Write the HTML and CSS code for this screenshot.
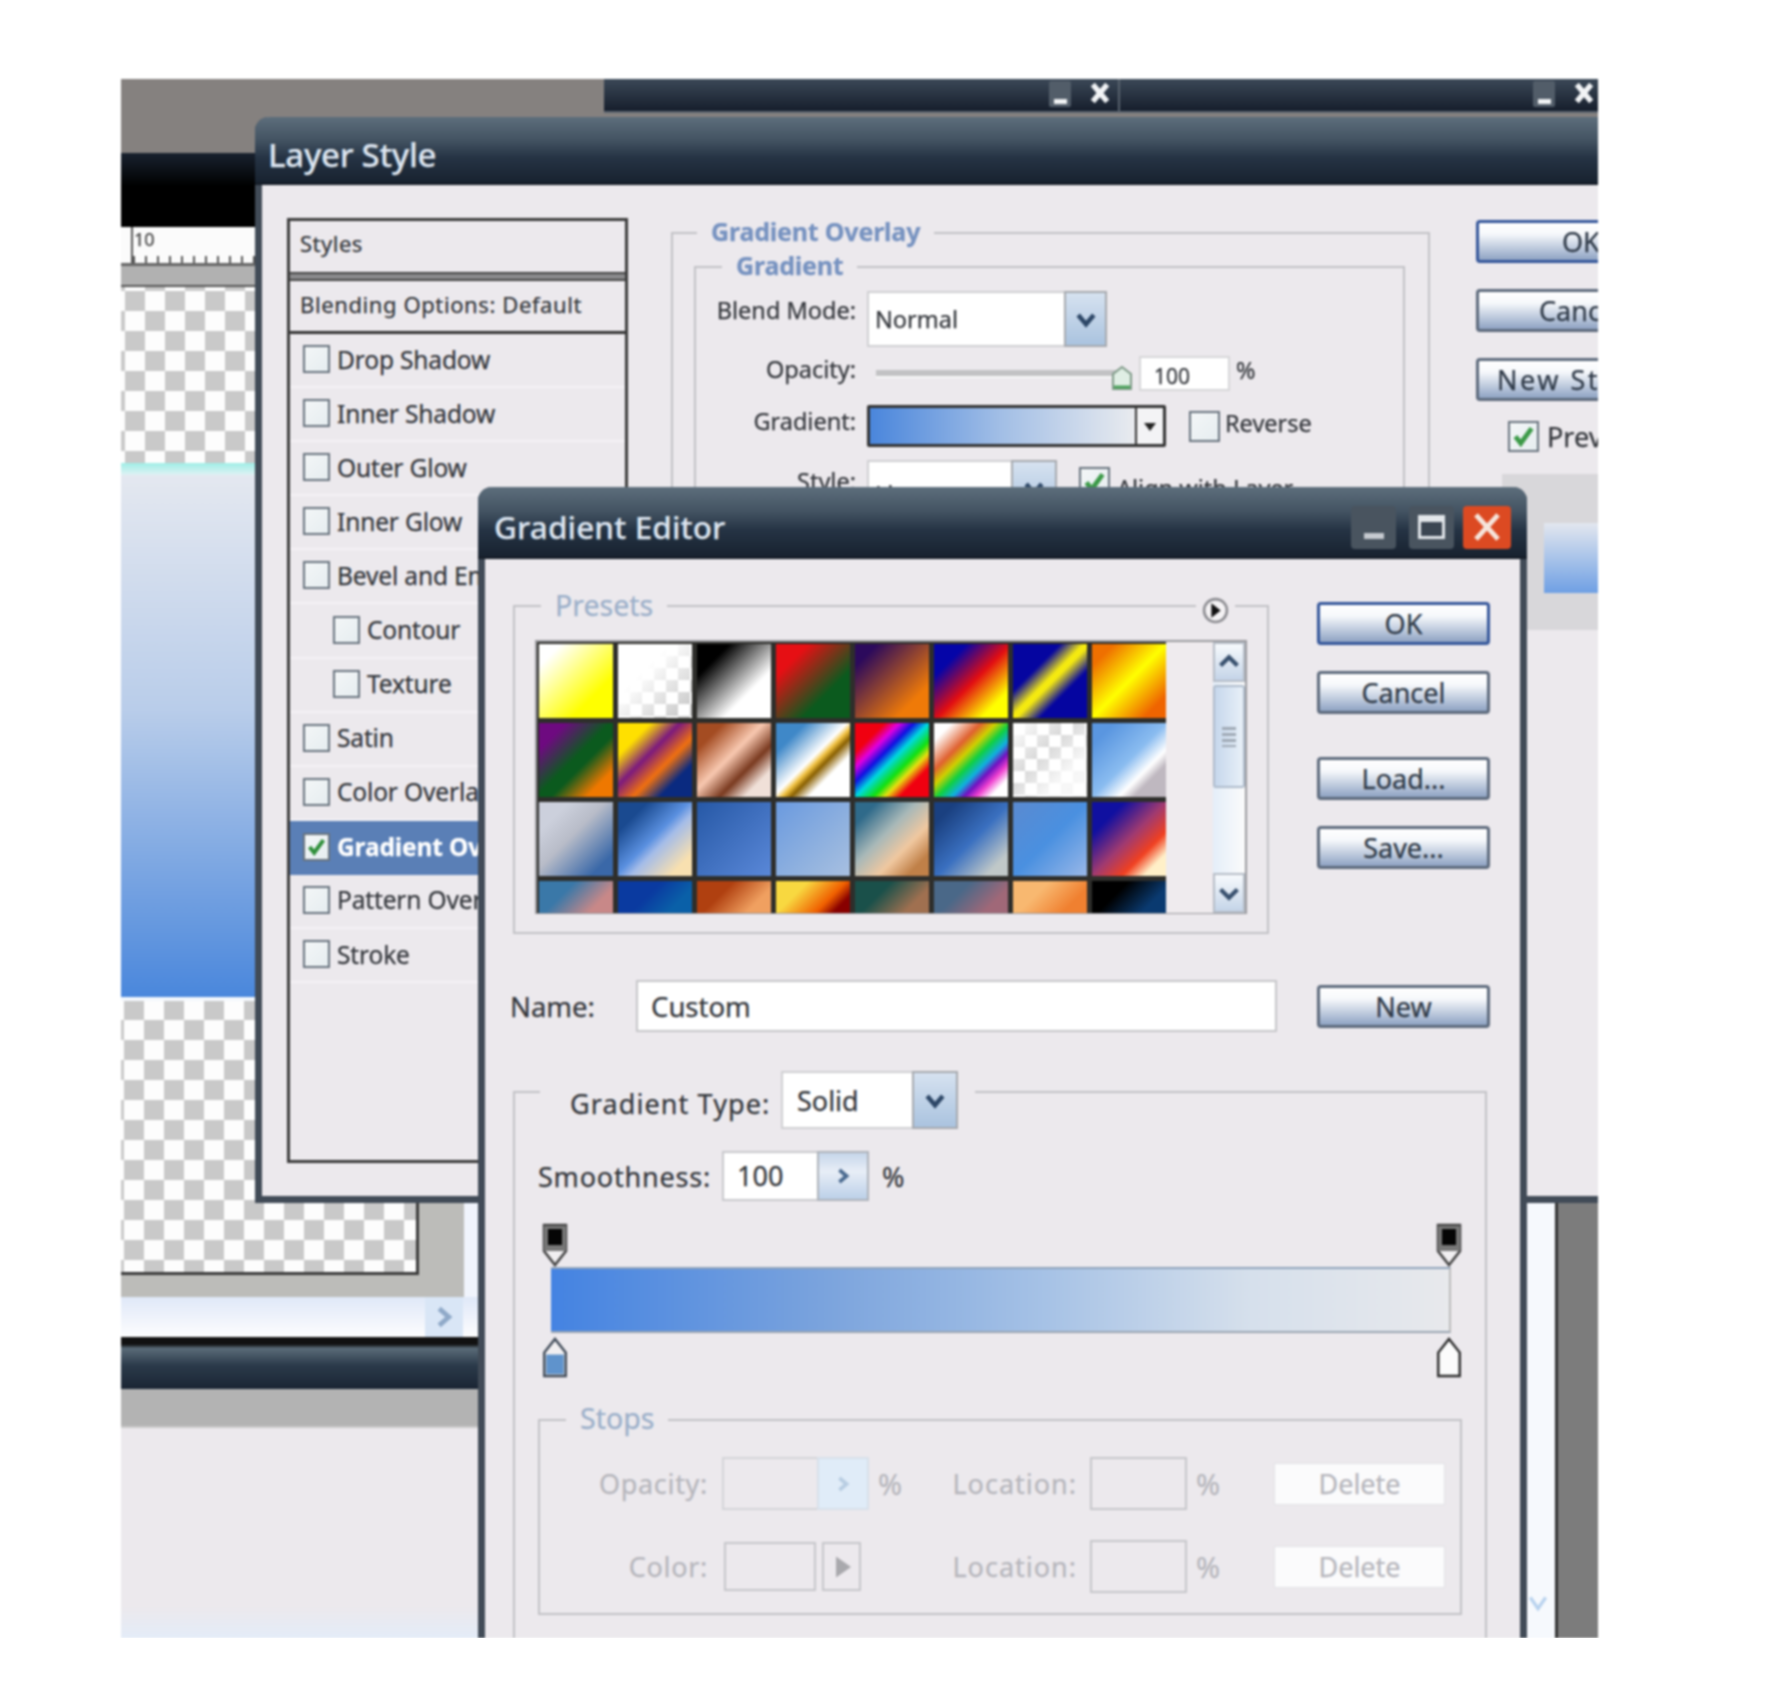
FILE: index.html
```html
<!DOCTYPE html>
<html lang="en">
<head>
    <meta charset="UTF-8">
    <title>Layer Style - Gradient Editor</title>
    <link rel="stylesheet" href="styles.css">
</head>
<body>
<div class="shot">
    <!-- the document behind the dialogs -->
    <div class="desk">
        <div class="band-top">
            <div class="tab tab-a">
                <span class="tab-min"></span>
                <svg class="tab-x" viewBox="0 0 20 20"><path d="M4 3l12 14M16 3L4 17" stroke="#f2f4f6" stroke-width="4.5"/></svg>
            </div>
            <div class="tab tab-b">
                <span class="tab-min"></span>
                <svg class="tab-x" viewBox="0 0 20 20"><path d="M4 3l12 14M16 3L4 17" stroke="#f2f4f6" stroke-width="4.5"/></svg>
            </div>
        </div>
        <div class="band-black"></div>
        <div class="ruler"><span class="ruler-num">10</span><div class="ruler-ticks"></div></div>
        <div class="band-grey"></div>
        <div class="checker checker-top"></div>
        <div class="band-cyan"></div>
        <div class="band-gradient"></div>
        <div class="band-white"></div>
        <div class="lower">
            <div class="checker checker-low"></div>
            <div class="lower-pale"></div>
        </div>
        <div class="lower lower-grey"><div class="lower-pale"></div></div>
        <div class="scroll-strip">
            <span class="scroll-btn"><svg viewBox="0 0 20 20"><path d="M6 3l8 7-8 7" fill="none" stroke="#8fa9c8" stroke-width="4"/></svg></span>
        </div>
        <div class="band-title"></div>
        <div class="band-grey2"></div>
        <div class="band-pale"></div>
    </div>

    <div class="dock">
        <svg class="dock-arrow" viewBox="0 0 20 20"><path d="M3 5l7 10 7-10" fill="none" stroke="#b8d2ee" stroke-width="3"/></svg>
        <div class="dock-grey"></div>
    </div>

    <!-- Layer Style dialog -->
    <div class="window layer-win">
        <div class="titlebar">Layer Style</div>
        <div class="layer-body">
            <div class="style-list">
                <div class="list-head">Styles</div>
                <div class="list-sep"></div>
                <div class="list-blend">Blending Options: Default</div>
                <div class="list-row"><span class="check"></span>Drop Shadow</div>
                <div class="list-row"><span class="check"></span>Inner Shadow</div>
                <div class="list-row"><span class="check"></span>Outer Glow</div>
                <div class="list-row"><span class="check"></span>Inner Glow</div>
                <div class="list-row"><span class="check"></span>Bevel and Emboss</div>
                <div class="list-row sub"><span class="check"></span>Contour</div>
                <div class="list-row sub"><span class="check"></span>Texture</div>
                <div class="list-row"><span class="check"></span>Satin</div>
                <div class="list-row"><span class="check"></span>Color Overlay</div>
                <div class="list-row selected"><span class="check"><svg viewBox="0 0 20 20"><path d="M4 10l4 5 8-11" fill="none" stroke="#2f8f3a" stroke-width="3.5"/></svg></span>Gradient Overlay</div>
                <div class="list-row"><span class="check"></span>Pattern Overlay</div>
                <div class="list-row"><span class="check"></span>Stroke</div>
            </div>

            <div class="group outer-group">
                <div class="legend legend-bold outer-legend">Gradient Overlay</div>
                <div class="group inner-group">
                    <div class="legend legend-bold inner-legend">Gradient</div>
                    <div class="field blend-field">
                        <label class="field-label">Blend Mode:</label>
                        <div class="select blend-select">
                            <span class="select-text">Normal</span>
                            <span class="select-btn"><svg viewBox="0 0 20 20"><path d="M4 7l6 7 6-7" fill="none" stroke="#2d4767" stroke-width="3.5"/></svg></span>
                        </div>
                    </div>
                    <div class="field opacity-field">
                        <label class="field-label">Opacity:</label>
                        <div class="slider"></div>
                        <svg class="slider-thumb" viewBox="0 0 24 26"><path d="M12 2l9 7v15H3V9z" fill="#dfeee4" stroke="#7f9a88" stroke-width="2"/><path d="M4 22h16" stroke="#4da35c" stroke-width="3"/></svg>
                        <div class="small-input">100</div>
                        <span class="percent">%</span>
                    </div>
                    <div class="field gradient-field">
                        <label class="field-label">Gradient:</label>
                        <div class="gradient-pick">
                            <div class="gradient-fill"></div>
                            <div class="gradient-drop"><svg viewBox="0 0 20 20"><path d="M4 7h12l-6 8z" fill="#222"/></svg></div>
                        </div>
                        <span class="check reverse-check"></span>
                        <span class="reverse-text">Reverse</span>
                    </div>
                    <div class="field style-field">
                        <label class="field-label">Style:</label>
                        <div class="select style-select">
                            <span class="select-text">Linear</span>
                            <span class="select-btn"><svg viewBox="0 0 20 20"><path d="M4 7l6 7 6-7" fill="none" stroke="#2d4767" stroke-width="3.5"/></svg></span>
                        </div>
                        <span class="check align-check"><svg viewBox="0 0 20 20"><path d="M4 10l4 5 8-11" fill="none" stroke="#3c9a48" stroke-width="3.5"/></svg></span>
                        <span class="align-text">Align with Layer</span>
                    </div>
                </div>
            </div>

            <div class="layer-actions">
                <div class="btn btn-default btn-cut">OK</div>
                <div class="btn btn-cut">Cancel</div>
                <div class="btn btn-cut btn-newstyle">New Style...</div>
                <div class="preview-row">
                    <span class="check"><svg viewBox="0 0 20 20"><path d="M4 10l4 5 8-11" fill="none" stroke="#3c9a48" stroke-width="3.5"/></svg></span>
                    <span>Preview</span>
                </div>
                <div class="preview-box"><div class="preview-swatch"></div></div>
            </div>
        </div>
    </div>

    <!-- Gradient Editor dialog -->
    <div class="window editor-win">
        <div class="titlebar editor-title">
            <span>Gradient Editor</span>
            <div class="win-btns">
                <div class="win-btn"><span class="win-min"></span></div>
                <div class="win-btn"><span class="win-max"></span></div>
                <div class="win-btn win-close"><svg viewBox="0 0 40 40"><path d="M10 9l20 22M30 9L10 31" stroke="#f6e6dc" stroke-width="4.5"/></svg></div>
            </div>
        </div>
        <div class="editor-body">
            <div class="editor-top">
                <div class="group presets-group">
                    <div class="legend legend-pale presets-legend">Presets</div>
                    <span class="presets-menu"><svg viewBox="0 0 26 26"><circle cx="13" cy="13" r="11" fill="#f4f2f4" stroke="#8d8d92" stroke-width="2.5"/><path d="M9 6l9 7-9 7z" fill="#111"/></svg></span>
                    <div class="presets-box">
                        <div class="presets-grid">
                            <div class="p p1"></div><div class="p p2"></div><div class="p p3"></div><div class="p p4"></div>
                            <div class="p p5"></div><div class="p p6"></div><div class="p p7"></div><div class="p p8"></div>
                            <div class="p p9"></div><div class="p p10"></div><div class="p p11"></div><div class="p p12"></div>
                            <div class="p p13"></div><div class="p p14"></div><div class="p p15"></div><div class="p p16"></div>
                            <div class="p p17"></div><div class="p p18"></div><div class="p p19"></div><div class="p p20"></div>
                            <div class="p p21"></div><div class="p p22"></div><div class="p p23"></div><div class="p p24"></div>
                            <div class="p p25"></div><div class="p p26"></div><div class="p p27"></div><div class="p p28"></div>
                            <div class="p p29"></div><div class="p p30"></div><div class="p p31"></div><div class="p p32"></div>
                        </div>
                        <div class="scrollbar">
                            <div class="sb-btn"><svg viewBox="0 0 20 20"><path d="M3 13l7-7 7 7" fill="none" stroke="#38506e" stroke-width="3.5"/></svg></div>
                            <div class="sb-thumb"><span class="sb-grip"></span></div>
                            <div class="sb-track"></div>
                            <div class="sb-btn"><svg viewBox="0 0 20 20"><path d="M3 7l7 7 7-7" fill="none" stroke="#38506e" stroke-width="3.5"/></svg></div>
                        </div>
                    </div>
                </div>
                <div class="editor-actions">
                    <div class="btn btn-default">OK</div>
                    <div class="btn">Cancel</div>
                    <div class="btn btn-gap">Load...</div>
                    <div class="btn">Save...</div>
                </div>
            </div>

            <div class="name-row">
                <label class="name-label">Name:</label>
                <div class="name-input">Custom</div>
                <div class="btn">New</div>
            </div>

            <div class="group type-group">
                <div class="type-legend">
                    <span class="type-label">Gradient Type:</span>
                    <div class="select type-select">
                        <span class="select-text">Solid</span>
                        <span class="select-btn"><svg viewBox="0 0 20 20"><path d="M4 7l6 7 6-7" fill="none" stroke="#2d4767" stroke-width="3.5"/></svg></span>
                    </div>
                </div>

                <div class="smooth-row">
                    <label class="smooth-label">Smoothness:</label>
                    <div class="spin">
                        <span class="spin-text">100</span>
                        <span class="spin-btn"><svg viewBox="0 0 20 20"><path d="M7 5l6 5-6 5" fill="none" stroke="#49698f" stroke-width="3"/></svg></span>
                    </div>
                    <span class="smooth-pct">%</span>
                </div>

                <div class="stop-row">
                    <svg class="stop" viewBox="0 0 26 44"><path d="M2 2h22v26L13 42 2 28z" fill="#f1eff1" stroke="#444" stroke-width="2.5"/><path d="M2 3h22v25H2z" fill="#777"/><path d="M6 6h14v16H6z" fill="#050505"/></svg>
                    <svg class="stop" viewBox="0 0 26 44"><path d="M2 2h22v26L13 42 2 28z" fill="#f1eff1" stroke="#444" stroke-width="2.5"/><path d="M2 3h22v25H2z" fill="#777"/><path d="M6 6h14v16H6z" fill="#050505"/></svg>
                </div>
                <div class="gradient-bar"></div>
                <div class="stop-row stop-row-low">
                    <svg class="stop" viewBox="0 0 26 42"><path d="M13 2l11 14v24H2V16z" fill="#f1eff1" stroke="#3f4a58" stroke-width="2.5"/><path d="M4 18h18v20H4z" fill="#5f93cc"/></svg>
                    <svg class="stop" viewBox="0 0 26 42"><path d="M13 2l11 14v24H2V16z" fill="#fbfbfb" stroke="#2c2c2c" stroke-width="2.5"/></svg>
                </div>

                <div class="group stops-group">
                    <div class="legend legend-pale stops-legend">Stops</div>
                    <div class="stops-line">
                        <span class="off-label">Opacity:</span>
                        <div class="spin spin-off">
                            <span class="spin-text"></span>
                            <span class="spin-btn"><svg viewBox="0 0 20 20"><path d="M7 5l6 5-6 5" fill="none" stroke="#b8cde2" stroke-width="3"/></svg></span>
                        </div>
                        <span class="off-pct">%</span>
                        <span class="off-loc">Location:</span>
                        <div class="off-input"></div>
                        <span class="off-pct off-pct-b">%</span>
                        <div class="btn-off">Delete</div>
                    </div>
                    <div class="stops-line stops-line-b">
                        <span class="off-label">Color:</span>
                        <div class="color-cell">
                            <div class="color-swatch"></div>
                            <div class="color-btn"><svg viewBox="0 0 20 20"><path d="M6 3l10 7-10 7z" fill="#a9a9ad"/></svg></div>
                        </div>
                        <span class="off-pct"></span>
                        <span class="off-loc">Location:</span>
                        <div class="off-input"></div>
                        <span class="off-pct off-pct-b">%</span>
                        <div class="btn-off">Delete</div>
                    </div>
                </div>
            </div>
        </div>
    </div>
</div>
</body>
</html>
```

FILE: styles.css
```css
body {
    margin: 0;
    background: #fff;
    font-family: "Noto Sans", "Open Sans", sans-serif;
    color: #33363b;
}

.shot {
    position: relative;
    width: 1477px;
    height: 1559px;
    margin: 79px 0 0 121px;
    overflow: hidden;
    filter: blur(0.8px);
    -webkit-text-stroke: 0.25px;
}

/* document behind */
.desk {
    display: flex;
    flex-direction: column;
    height: 100%;
}

.band-top {
    display: flex;
    height: 74px;
    padding-left: 483px;
    background: #85817f;
    box-sizing: border-box;
}

.tab {
    display: flex;
    align-items: flex-start;
    justify-content: flex-end;
    gap: 17px;
    height: 34px;
    padding-top: 2px;
    background: linear-gradient(#3b4857, #161e2c);
    border-bottom: 2px solid #5b6570;
    box-sizing: border-box;
}

.tab-a { width: 516px; padding-right: 6px; border-right: 2px solid #59636e; }
.tab-b { flex: 1; padding-right: 2px; }

.tab-min {
    width: 22px;
    height: 26px;
    background: linear-gradient(#f0f2f4, #f0f2f4) center bottom 3px / 13px 5px no-repeat, #525d69;
    border-radius: 2px;
}

.tab-x { width: 24px; height: 24px; }

.band-black { height: 74px; background: linear-gradient(#19222f, #000 45%); }

.ruler {
    position: relative;
    height: 39px;
    background: #fbfbfb;
    border-bottom: 3px solid #666;
    box-sizing: border-box;
}

.ruler-num {
    position: absolute;
    left: 13px;
    top: 0;
    font-size: 18px;
    color: #444;
}

.ruler-ticks {
    position: absolute;
    left: 10px;
    right: 0;
    top: 0;
    bottom: 0;
    border-left: 2px solid #555;
    background: repeating-linear-gradient(90deg, #555 0 2px, transparent 2px 12px) 0 100% / 100% 7px no-repeat;
}

.band-grey { height: 21px; background: #b1b1b1; border-bottom: 2px solid #555; box-sizing: border-box; }

.checker {
    background: repeating-conic-gradient(#c9c9c9 0 25%, #fdfdfd 0 50%) -16px 4px / 40px 40px;
}

.checker-top { height: 176px; }
.band-cyan { height: 12px; background: linear-gradient(#9feee6, #dff2f4); }
.band-gradient { height: 522px; background: linear-gradient(#e4e8f0, #b9cdea 45%, #4a87dc); }
.band-white { height: 4px; background: #f4f8fd; }

.lower { display: flex; width: 357px; height: 274px; background: #bcbcb9; }
.checker-low { width: 298px; background-position: -17px -1px; border-right: 3px solid #3a3a3a; border-bottom: 3px solid #3a3a3a; box-sizing: border-box; }
.lower-pale { width: 14px; margin-left: auto; background: #f0f4fc; }

.lower-grey { height: 22px; }

.scroll-strip {
    display: flex;
    justify-content: flex-end;
    height: 40px;
    width: 357px;
    padding-right: 15px;
    box-sizing: border-box;
    background: linear-gradient(#dfe8f8, #fdfdfe);
}

.scroll-btn {
    display: flex;
    align-items: center;
    justify-content: center;
    width: 38px;
    background: #d9e6f6;
}

.scroll-btn svg { width: 24px; height: 24px; }

.band-title { height: 52px; background: linear-gradient(#111 0 14%, #5a6b78 22%, #2b3a4a 55%, #1a2534); }
.band-grey2 { height: 39px; background: #b3b3b3; border-bottom: 2px solid #c9c9c9; box-sizing: border-box; }
.band-pale { flex: 1; background: linear-gradient(#ece9ed 85%, #e4ecf8); }

.dock {
    position: absolute;
    right: 0;
    top: 1122px;
    bottom: 0;
    display: flex;
    width: 71px;
    background: #f6f9fd;
}

.dock-grey { position: absolute; right: 0; top: 0; bottom: 0; width: 40px; background: #7c7c7c; border-left: 3px solid #333; }
.dock-arrow { position: absolute; left: 0; bottom: 20px; width: 22px; height: 30px; }

/* dialogs */
.window {
    position: absolute;
    background: #ece9ed;
    border: 7px solid #414b57;
    border-top: 0;
    border-radius: 14px 14px 0 0;
    box-sizing: border-box;
}

.layer-win { left: 134px; top: 38px; width: 1500px; height: 1086px; }
.editor-win { left: 357px; top: 408px; width: 1049px; height: 1200px; border-bottom: 0; }

.titlebar {
    margin: 0 -7px;
    height: 68px;
    padding: 8px 13px 0;
    box-sizing: border-box;
    display: flex;
    align-items: center;
    justify-content: space-between;
    background: linear-gradient(#5d6e7c, #435362 35%, #253344 62%, #18222f);
    border-radius: 14px 14px 0 0;
    border-bottom: 2px solid #151c26;
    font-size: 33px;
    font-weight: 500;
    color: #dde5f0;
    letter-spacing: -0.3px;
}

.editor-title { height: 72px; padding: 8px 16px 0; font-size: 31.5px; letter-spacing: 0.1px; }

.win-btns { display: flex; gap: 13px; margin-top: 2px; }

.win-btn {
    display: flex;
    align-items: center;
    justify-content: center;
    width: 45px;
    height: 43px;
    background: #49545f;
    border-radius: 4px;
    box-sizing: border-box;
}

.win-btn:nth-child(2) { margin-right: -4px; }

.win-min { width: 20px; height: 6px; margin-top: 18px; background: #c6cad0; }
.win-max { width: 27px; height: 24px; background: #3b4652; border: 3px solid #e2e6ea; border-top-width: 7px; box-sizing: border-box; }

.win-close { width: 48px; background: #dc4a22; }
.win-close svg { width: 44px; height: 44px; }

.layer-body { display: flex; height: 1018px; padding: 33px 0 0 25px; box-sizing: border-box; }

/* style list */
.style-list {
    width: 341px;
    height: 945px;
    flex-shrink: 0;
    border: 3px solid #3c3c3c;
    box-sizing: border-box;
    font-size: 24.5px;
    letter-spacing: -0.15px;
}

.list-head { height: 51px; line-height: 45px; padding-left: 10px; font-size: 22px; letter-spacing: 0.5px; }
.list-sep { height: 9px; background: #8a8a8c; border-top: 2px solid #444; border-bottom: 2px solid #444; box-sizing: border-box; }
.list-blend { height: 53px; line-height: 46px; padding-left: 10px; font-size: 22px; letter-spacing: 0.6px; border-bottom: 3px solid #333; box-sizing: border-box; }

.list-row {
    display: flex;
    align-items: center;
    gap: 7px;
    height: 54.1px;
    padding: 0 0 2px 13px;
    box-sizing: border-box;
    border-bottom: 2px solid #f4f2f5;
    white-space: nowrap;
}

.list-row.sub { padding-left: 43px; }

.list-row.selected { background: #5a7fb6; color: #fff; font-weight: 700; border-bottom: 0; }

.check {
    display: inline-block;
    flex-shrink: 0;
    width: 27px;
    height: 28px;
    background: linear-gradient(135deg, #f3f6f7, #e6edf0);
    border: 2px solid #68737e;
    box-sizing: border-box;
}

.check svg { display: block; width: 100%; height: 100%; }

/* group boxes */
.group {
    position: relative;
    border: 2px solid #c2c2c6;
    box-sizing: border-box;
}

.legend {
    position: absolute;
    padding: 0 14px;
    background: #ece9ed;
    white-space: nowrap;
    line-height: 30px;
}

.legend-bold { color: #7692c0; font-weight: 700; font-size: 25px; letter-spacing: -0.2px; }
.legend-pale { color: #9bafc9; font-size: 28.5px; }

.outer-group { width: 759px; height: 700px; margin: 14px 0 0 43px; padding: 32px 23px 0 21px; flex-shrink: 0; }
.outer-legend { left: 24px; top: -18px; }
.inner-group { height: 500px; padding-top: 23px; }
.inner-legend { left: 26px; top: -18px; }

.field { display: flex; align-items: center; font-size: 23.5px; }

.field-label { width: 160px; margin-right: 11px; text-align: right; flex-shrink: 0; }

.blend-field { height: 56px; margin-bottom: 9px; }
.blend-field .field-label { margin-bottom: 18px; }
.opacity-field { height: 35px; margin-bottom: 14px; }
.opacity-field .field-label { margin-bottom: 10px; }
.gradient-field { height: 42px; margin-bottom: 13px; }
.gradient-field .field-label { margin-bottom: 10px; }
.style-field { height: 56px; }
.style-field .field-label { margin-bottom: 14px; }

.select {
    display: flex;
    background: #fff;
    border: 2px solid #cfcfd2;
    box-sizing: border-box;
}

.select-text { flex: 1; padding-left: 6px; align-self: flex-end; padding-bottom: 10px; }

.select-btn {
    display: flex;
    align-items: center;
    justify-content: center;
    background: linear-gradient(#d6e2f0, #aac3df);
    border: 2px solid #a6a9ae;
    margin: -2px;
}

.select-btn svg { width: 26px; height: 26px; }

.blend-select { width: 240px; height: 56px; }
.blend-select .select-btn { width: 39px; }
.style-select { width: 190px; height: 56px; }
.style-select .select-btn { width: 42px; }
.style-select .select-text { padding-bottom: 4px; }

.slider {
    width: 240px;
    height: 6px;
    margin-left: 9px;
    background: #c2c2c4;
    border-bottom: 2px solid #f8f8f8;
}

.slider-thumb { width: 24px; height: 26px; margin: 8px -6px 0 -6px; }

.small-input {
    width: 91px;
    height: 35px;
    margin-left: 11px;
    padding-left: 13px;
    line-height: 36px;
    background: #fff;
    border: 2px solid #d6d6d8;
    box-sizing: border-box;
    font-size: 21px;
}

.percent { margin: -8px 0 0 6px; }

.gradient-pick {
    display: flex;
    width: 299px;
    height: 42px;
    border: 3px solid #333;
    border-radius: 2px;
    box-sizing: border-box;
}

.gradient-fill { flex: 1; background: linear-gradient(90deg, #4a86dc, #a3bfe6 50%, #e9ebef); }

.gradient-drop {
    display: flex;
    align-items: center;
    justify-content: center;
    width: 26px;
    background: #f3f3f5;
    border-left: 2px solid #333;
}

.gradient-drop svg { width: 20px; height: 20px; }

.reverse-check { width: 31px; height: 31px; margin-left: 23px; }
.reverse-text { margin: 0 0 6px 5px; letter-spacing: 0; }

.align-check { width: 31px; height: 31px; margin: 0 0 12px 22px; }
.align-text { margin: 0 0 0 7px; }

/* buttons */
.btn {
    display: flex;
    align-items: center;
    justify-content: center;
    width: 173px;
    height: 43px;
    border: 3px solid #5d6a7c;
    border-radius: 4px;
    background: linear-gradient(#fff, #f6f8fb 30%, #a9b9d2 82%, #8ea2c2);
    box-sizing: border-box;
    font-size: 27px;
    color: #2f3a48;
    white-space: nowrap;
}

.btn-default { border-color: #34569a; }

.layer-actions { width: 173px; margin-left: 46px; flex-shrink: 0; }
.layer-actions .btn { margin-bottom: 26px; justify-content: flex-start; padding-left: 18px; }
.layer-actions .btn-default { margin-top: 2px; padding-left: 83px; }
.layer-actions .btn:nth-child(2) { padding-left: 60px; }
.layer-actions .btn-newstyle { letter-spacing: 2.5px; }

.preview-row { display: flex; align-items: center; gap: 8px; margin: -9px 0 0 32px; font-size: 27px; white-space: nowrap; }
.preview-row .check { width: 31px; height: 31px; }

.preview-box {
    width: 300px;
    height: 156px;
    margin: 19px 0 0 26px;
    padding: 49px 0 0 42px;
    background: #d8d7da;
    box-sizing: border-box;
}

.preview-swatch { height: 70px; background: linear-gradient(#e3e7ef, #6fa0e4); }

/* gradient editor */
.editor-body { padding: 43px 0 0 28px; }

.editor-top { display: flex; }

.presets-group { width: 756px; height: 329px; margin-top: 3px; padding: 33px 0 0 20px; }
.presets-legend { left: 26px; top: -17px; }

.presets-menu {
    position: absolute;
    right: 32px;
    top: -10px;
    width: 27px;
    height: 27px;
    padding: 0 6px;
    background: #ece9ed;
}

.presets-menu svg { display: block; width: 27px; height: 27px; }

.presets-box {
    display: flex;
    width: 712px;
    height: 274px;
    border: 2px solid #9a9a9e;
    border-bottom-width: 1px;
    background: #efebee;
    box-sizing: border-box;
    overflow: hidden;
}

.presets-grid {
    display: grid;
    grid-template-columns: repeat(8, 74px);
    grid-auto-rows: 74px;
    gap: 5px;
    width: 629px;
    padding: 2px 0 0 2px;
    background: #2e2e2b;
    box-sizing: border-box;
    flex-shrink: 0;
}

.scrollbar {
    display: flex;
    flex-direction: column;
    width: 32px;
    margin-left: auto;
    background: linear-gradient(90deg, #e4eef9, #fbfbfb);
}

.sb-btn {
    display: flex;
    align-items: center;
    justify-content: center;
    height: 40px;
    background: linear-gradient(#f7fafd, #c4d4e8);
    border: 2px solid #b5bcc6;
    box-sizing: border-box;
    flex-shrink: 0;
}

.sb-btn svg { width: 24px; height: 24px; }

.sb-thumb {
    display: flex;
    align-items: center;
    justify-content: center;
    height: 103px;
    margin-top: 3px;
    background: linear-gradient(90deg, #c6d7ec, #e8f0f8);
    border: 2px solid #aebbcb;
    border-radius: 3px;
    box-sizing: border-box;
}

.sb-grip { width: 14px; height: 20px; background: repeating-linear-gradient(#9fa9b5 0 3px, transparent 3px 6px); }
.sb-track { flex: 1; }

.editor-actions { margin-left: 48px; }
.editor-actions .btn { margin-bottom: 26px; }
.editor-actions .btn-gap { margin-top: 43px; }

.name-row { display: flex; align-items: center; height: 52px; margin-top: 46px; }
.name-label { width: 126px; margin-left: -3px; font-size: 27.5px; }

.name-input {
    width: 641px;
    height: 52px;
    margin-right: 40px;
    padding-left: 13px;
    line-height: 50px;
    background: #fff;
    border: 2px solid #c6c6c9;
    box-sizing: border-box;
    font-size: 27.5px;
}

.type-group { width: 974px; height: 800px; margin-top: 59px; padding: 58px 0 0 23px; }

.type-legend {
    position: absolute;
    left: 25px;
    top: -22px;
    display: flex;
    align-items: center;
    padding: 0 17px 0 30px;
    background: #ece9ed;
}

.type-label { width: 211px; font-size: 27px; letter-spacing: 1.1px; white-space: nowrap; padding-top: 6px; }
.type-select { width: 177px; height: 58px; font-size: 27px; }
.type-select .select-text { padding: 0 0 0 14px; align-self: center; }
.type-select .select-btn { width: 42px; }

.smooth-row { display: flex; align-items: center; height: 50px; font-size: 27px; }
.smooth-label { width: 184px; letter-spacing: 0.8px; white-space: nowrap; }
.smooth-pct { margin-left: 13px; }

.spin {
    display: flex;
    width: 147px;
    height: 50px;
    background: #fff;
    border: 2px solid #c8c8cc;
    box-sizing: border-box;
}

.spin-text { flex: 1; padding-left: 13px; line-height: 46px; }

.spin-btn {
    display: flex;
    align-items: center;
    justify-content: center;
    width: 48px;
    background: linear-gradient(#c6d6ea, #e8eef7 40%, #bcd0e8);
    margin: -2px;
    border: 2px solid #aeb3ba;
}

.spin-btn svg { width: 24px; height: 24px; }

.stop-row {
    display: flex;
    justify-content: space-between;
    width: 924px;
    height: 44px;
    margin-top: 22px;
    padding-left: 4px;
    box-sizing: border-box;
}

.stop-row-low { height: 41px; margin-top: 4px; }
.stop { width: 26px; height: 100%; }

.gradient-bar {
    width: 900px;
    height: 66px;
    margin-left: 13px;
    background: linear-gradient(90deg, #4483e2, #7aa3dd 30%, #a6c2e6 55%, #d6e0ec 78%, #e8e9ec);
    border-top: 2px solid #8fa3bb;
    border-bottom: 2px solid #9aa5b2;
    border-right: 2px solid #bbb;
    box-sizing: border-box;
}

.stops-group { width: 924px; height: 196px; margin-top: 41px; padding-top: 36px; color: #b6b6bc; font-size: 27px; }
.stops-legend { left: 26px; top: -18px; }

.stops-line { display: flex; align-items: center; height: 53px; }
.stops-line-b { margin-top: 30px; }

.off-label { width: 168px; margin-right: 14px; text-align: right; letter-spacing: 0.7px; }
.off-pct { width: 84px; padding-left: 9px; box-sizing: border-box; font-size: 29px; }
.off-pct-b { width: 87px; }
.off-loc { width: 124px; margin-right: 13px; display: flex; justify-content: flex-end; letter-spacing: 1px; white-space: nowrap; }

.off-input { width: 97px; height: 53px; border: 2px solid #c6c6ca; box-sizing: border-box; }

.spin-off { background: transparent; border-color: #d4d4d8; height: 53px; }
.spin-off .spin-btn { background: #e0ecf8; border-color: #d8e0ea; }

.color-cell { display: flex; gap: 6px; width: 147px; padding-left: 2px; box-sizing: border-box; }
.color-swatch { width: 92px; height: 49px; border: 2px solid #c6c6ca; box-sizing: border-box; }
.color-btn { display: flex; align-items: center; justify-content: center; width: 39px; height: 49px; border: 2px solid #c6c6ca; box-sizing: border-box; }
.color-btn svg { width: 30px; height: 30px; }

.btn-off {
    display: flex;
    align-items: center;
    justify-content: center;
    width: 171px;
    height: 42px;
    background: #fbfbfc;
    border: 1px solid #e2e2e6;
    box-sizing: border-box;
}

/* preset swatches */
.p1 { background: linear-gradient(135deg, #fff 15%, #ff0 72%); }
.p2 { background: linear-gradient(135deg, #fff 35%, rgba(255, 255, 255, 0) 95%), repeating-conic-gradient(#c8c8c8 0 25%, #fff 0 50%) 0 0 / 24px 24px; }
.p3 { background: linear-gradient(135deg, #000 22%, #fff 68%); }
.p4 { background: linear-gradient(135deg, #e60f14 22%, #0b5a1e 68%); }
.p5 { background: linear-gradient(135deg, #2c0a5c 15%, #ef7a08 78%); }
.p6 { background: linear-gradient(135deg, #0505a8 22%, #e20d12 52%, #ff0 82%); }
.p7 { background: linear-gradient(135deg, #0505a0 32%, #f5ea10 48%, #f5ea10 52%, #0505a0 68%); }
.p8 { background: linear-gradient(135deg, #ef7000 15%, #ff0 50%, #ef6400 85%); }
.p9 { background: linear-gradient(135deg, #6e0a80 18%, #0b5a1e 48%, #0b5a1e 58%, #ef7800 82%); }
.p10 { background: linear-gradient(135deg, #ffe000 22%, #7c1a7e 42%, #ef7010 60%, #0a2a80 78%); }
.p11 { background: linear-gradient(135deg, #a44c22 18%, #f8c8b0 45%, #7a3a20 65%, #f0e0d8 82%); }
.p12 { background: linear-gradient(135deg, #3f88c8 20%, #fff 48%, #f0c040 54%, #8a6000 60%, #fff 72%); }
.p13 { background: linear-gradient(135deg, #f00010 20%, #e000e0 30%, #1010e0 40%, #00d8e0 50%, #10e010 62%, #e8e010 70%, #f00010 80%); }
.p14 { background: linear-gradient(135deg, #fff 12%, #e06030 32%, #d0d000 42%, #10d040 52%, #10b0e0 62%, #7010c0 70%, #f040d0 78%, #fff 88%); }
.p15 { background: linear-gradient(135deg, rgba(255, 255, 255, 0.85) 10%, rgba(255, 255, 255, 0.3) 40%, rgba(255, 255, 255, 0.85) 70%), repeating-conic-gradient(#c8c8c8 0 25%, #fff 0 50%) 0 0 / 24px 24px; }
.p16 { background: linear-gradient(135deg, #5a96e0 15%, #8abcf0 50%, #fff 68%, #bfb8c0 78%); }
.p17 { background: linear-gradient(135deg, #ccd0dc 20%, #b8bcc8 45%, #3a68a8 85%); }
.p18 { background: linear-gradient(135deg, #1a4a90 20%, #5a90e0 48%, #a4bce8 58%, #f8e0b0 85%); }
.p19 { background: linear-gradient(135deg, #2658a6, #5a88d8); }
.p20 { background: linear-gradient(135deg, #6a9adf, #a8c0e0); }
.p21 { background: linear-gradient(135deg, #2f6a8a 15%, #a8b8b8 42%, #f0c8a0 65%, #c08048 85%); }
.p22 { background: linear-gradient(135deg, #1a4080 15%, #3a70c0 52%, #c0c8c8 85%); }
.p23 { background: linear-gradient(135deg, #5a8ad0, #4a90e0 50%, #9ab8e8); }
.p24 { background: linear-gradient(135deg, #1010a0 22%, #a03a70 50%, #f04020 70%, #fff0c8 85%); }
.p25 { background: linear-gradient(135deg, #3a78a8 25%, #c88888 55%); }
.p26 { background: linear-gradient(135deg, #0a3aa0 30%, #0a60a8 55%); }
.p27 { background: linear-gradient(135deg, #b04010 25%, #f0a060 55%); }
.p28 { background: linear-gradient(135deg, #f8d840 22%, #f06000 48%, #800 60%); }
.p29 { background: linear-gradient(135deg, #1a504a 25%, #a07050 55%); }
.p30 { background: linear-gradient(135deg, #4a6888 25%, #a06878 55%); }
.p31 { background: linear-gradient(135deg, #f8b870 25%, #f08030 55%); }
.p32 { background: linear-gradient(135deg, #000 25%, #0a3a70 55%); }
```
